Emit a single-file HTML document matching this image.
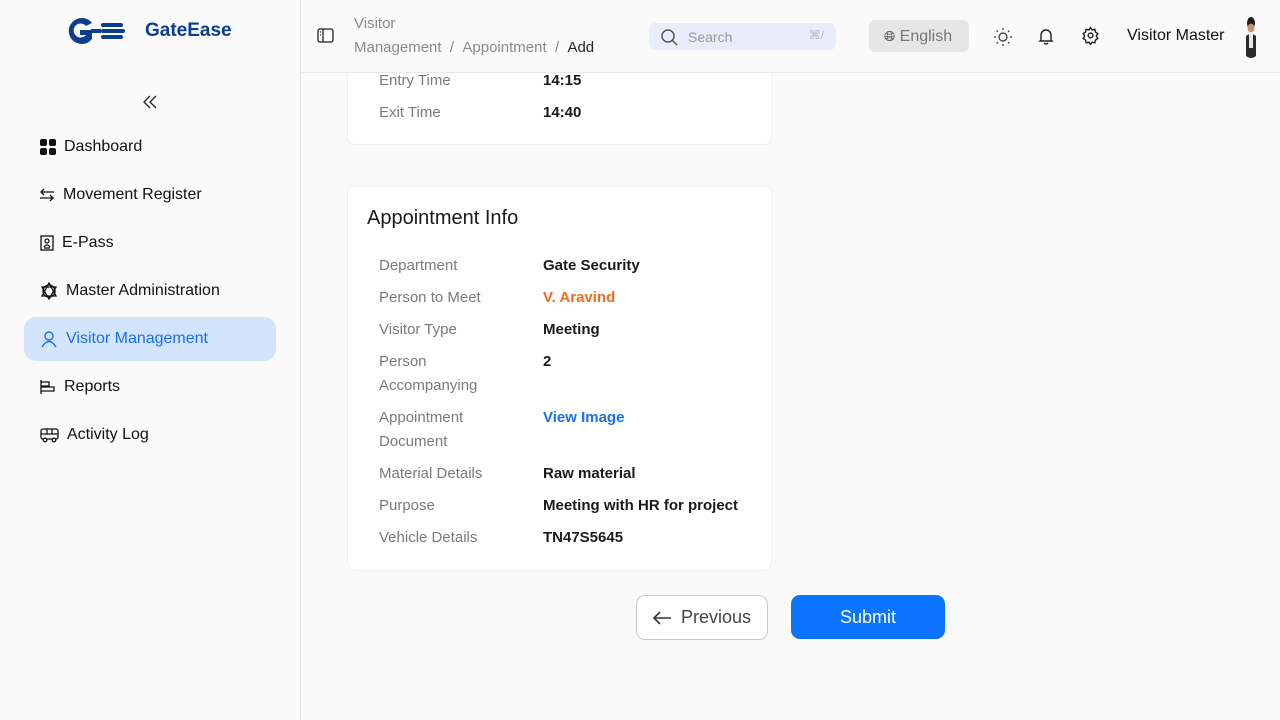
<!DOCTYPE html>
<html><head><style>
*{box-sizing:border-box;margin:0;padding:0}
body{width:1280px;height:720px;overflow:hidden;background:#fafafa;font-family:"Liberation Sans",sans-serif;color:#1a1a1a;position:relative}
.side{position:absolute;left:0;top:0;width:301px;height:720px;border-right:1px solid #e6e6e6;background:#fafafa}
.logo{position:absolute;left:65px;top:16px}
.brand{position:absolute;left:145px;top:20px;font-size:19px;font-weight:bold;color:#0b3d91}
.nav{position:absolute;left:24px;width:252px;height:44px;border-radius:12px;display:flex;align-items:center;padding-left:16px;font-size:16px;color:#111}
.nav svg{margin-right:8px}
.nav.act{background:#d3e5fd;color:#1a6ff0}
.hdr{position:absolute;left:301px;top:0;right:0;height:73px;border-bottom:1px solid #e8e8e8;background:#fafafa;z-index:10}
.card{position:absolute;left:347px;width:425px;background:#fff;border:1px solid #f0f0f0;border-radius:8px}
.row{position:absolute;left:379px;font-size:15px;color:#7a7a7a;line-height:24px}
.val{position:absolute;left:543px;font-size:15px;font-weight:bold;color:#1a1a1a;line-height:24px}
</style></head><body>
<div class="side">
<svg class="logo" width="60" height="30" viewBox="0 0 60 30"><path d="M27 7A13 13 0 1 0 27 23L27 14H15V19H21A7 7 0 1 1 21 10Z" fill="#0b3d91"/><rect x="26" y="13" width="10" height="4" fill="#0b3d91"/><rect x="36" y="7" width="22" height="4" rx="2" fill="#0b3d91"/><rect x="36" y="13" width="24" height="4" rx="2" fill="#0b3d91"/><rect x="36" y="19" width="22" height="4" rx="2" fill="#0b3d91"/></svg>
<div class="brand">GateEase</div>
<svg style="position:absolute;left:142px;top:94px" width="16" height="16" viewBox="0 0 16 16" fill="none" stroke="#222" stroke-width="1.3"><path d="M8 2L2 8L8 14M14 2L8 8L14 14"/></svg>
<div class="nav" style="top:125px"><svg width="16" height="16" viewBox="0 0 16 16" fill="#111"><rect x="0" y="0" width="7" height="7" rx="2"/><rect x="9" y="0" width="7" height="7" rx="2"/><rect x="0" y="9" width="7" height="7" rx="2"/><rect x="9" y="9" width="7" height="7" rx="2"/></svg>Dashboard</div>
<div class="nav" style="top:173px;padding-left:15px"><svg width="16" height="16" viewBox="0 0 16 16" fill="none" stroke="#111" stroke-width="1.3"><path d="M15 5H2M5 2L2 5L5 8M1 11H14M11 8L14 11L11 14"/></svg>Movement Register</div>
<div class="nav" style="top:221px"><svg width="14" height="16" viewBox="0 0 14 16" fill="none" stroke="#111" stroke-width="1.3"><rect x="1" y="1" width="12" height="14"/><circle cx="7" cy="6" r="2"/><path d="M4 12Q7 8 10 12M4 13H10"/></svg>E-Pass</div>
<div class="nav" style="top:269px"><svg width="18" height="18" viewBox="0 0 18 18" fill="none" stroke="#111" stroke-width="1.3"><circle cx="9" cy="9" r="6"/><path d="M9 1L16 14H2Z"/><path d="M2 5H16L9 17Z"/></svg>Master Administration</div>
<div class="nav act" style="top:317px"><svg width="18" height="18" viewBox="0 0 18 18" fill="none" stroke="#1a6ff0" stroke-width="1.4"><circle cx="9" cy="6" r="4"/><path d="M2 17Q9 6 16 17"/></svg>Visitor Management</div>
<div class="nav" style="top:365px"><svg width="16" height="16" viewBox="0 0 16 16" fill="none" stroke="#111" stroke-width="1.3"><path d="M1 1V15M1 3H9V7H1M1 8H14V12H1"/></svg>Reports</div>
<div class="nav" style="top:413px"><svg width="19" height="16" viewBox="0 0 19 16" fill="none" stroke="#111" stroke-width="1.3"><rect x="1" y="2" width="17" height="10" rx="2"/><path d="M1 7H18M7 2V7M12 2V7"/><circle cx="5" cy="13" r="1.8" fill="#fff"/><circle cx="14" cy="13" r="1.8" fill="#fff"/></svg>Activity Log</div>
</div>
<div class="hdr">
<svg style="position:absolute;left:16px;top:28px" width="17" height="15" viewBox="0 0 17 15" fill="none" stroke="#222" stroke-width="1.3"><rect x="1" y="1" width="15" height="13" rx="2"/><path d="M6 1V14M3 4H4M3 7H4"/></svg>
<div style="position:absolute;left:53px;top:12px;font-size:15px;line-height:24px;color:#8a8a8a;white-space:nowrap">Visitor<br>Management&nbsp; / &nbsp;Appointment&nbsp; / &nbsp;<span style="color:#222">Add</span></div>
<div style="position:absolute;left:348px;top:23px;width:187px;height:27px;border-radius:7px;background:#e8ecfb"><svg style="position:absolute;left:11px;top:5px" width="18" height="18" viewBox="0 0 18 18" fill="none" stroke="#555" stroke-width="1.5"><circle cx="8" cy="8" r="6"/><path d="M12.5 12.5L17 17"/></svg><span style="position:absolute;left:39px;top:6px;font-size:14px;color:#999">Search</span><span style="position:absolute;right:12px;top:5px;font-size:12px;color:#bbb">⌘/</span></div>
<div style="position:absolute;left:568px;top:20px;width:100px;height:32px;border-radius:6px;background:#e6e6e6;font-size:16px;color:#777;line-height:32px;padding-left:15px"><span style="font-size:14px;color:#333">🌐︎</span> English</div>
<svg style="position:absolute;left:692px;top:27px" width="20" height="20" viewBox="0 0 20 20" fill="none" stroke="#333" stroke-width="1.2"><circle cx="10" cy="10" r="4"/><path d="M10 1V3M10 17V19M1 10H3M17 10H19M3.6 3.6L5 5M15 15L16.4 16.4M3.6 16.4L5 15M15 5L16.4 3.6"/></svg>
<svg style="position:absolute;left:737px;top:27px" width="16" height="18" viewBox="0 0 16 18" fill="none" stroke="#222" stroke-width="1.4"><path d="M3 13V8A5 5 0 0 1 13 8V13L14 14H2Z"/><path d="M6 16Q8 18 10 16"/></svg>
<svg style="position:absolute;left:780px;top:26px" width="19" height="19" viewBox="0 0 24 24" fill="none" stroke="#222" stroke-width="1.8"><circle cx="12" cy="12" r="3"/><path d="M12 2l2 3 3.5-.8.8 3.5 3 2-2 3 2 3-3 2-.8 3.5-3.5-.8-2 3-2-3-3.5.8-.8-3.5-3-2 2-3-2-3 3-2 .8-3.5 3.5.8z"/></svg>
<div style="position:absolute;left:826px;top:27px;font-size:16px;color:#111">Visitor Master</div>
<svg style="position:absolute;left:943px;top:14px" width="14" height="46" viewBox="0 0 14 46"><ellipse cx="7" cy="9" rx="4" ry="6" fill="#1a1a1a"/><ellipse cx="7" cy="14" rx="3.5" ry="4.5" fill="#c98f6f"/><path d="M2 22Q7 18 12 22L12 42Q7 46 2 42Z" fill="#2a2a2a"/><rect x="5" y="20" width="4" height="14" fill="#e8e8e8"/></svg>
</div>
<div class="card" style="top:40px;height:105px"></div>
<div class="row" style="top:69px">Entry Time</div><div class="val" style="top:69px">14:15</div>
<div class="row" style="top:101px">Exit Time</div><div class="val" style="top:101px">14:40</div>
<div class="card" style="top:185px;height:386px"></div>
<div style="position:absolute;left:367px;top:207px;font-size:20px;color:#1a1a1a">Appointment Info</div>
<div class="row" style="top:254px">Department</div><div class="val" style="top:254px">Gate Security</div>
<div class="row" style="top:286px">Person to Meet</div><div class="val" style="top:286px;color:#f06a21">V. Aravind</div>
<div class="row" style="top:318px">Visitor Type</div><div class="val" style="top:318px">Meeting</div>
<div class="row" style="top:350px">Person<br>Accompanying</div><div class="val" style="top:350px">2</div>
<div class="row" style="top:406px">Appointment<br>Document</div><div class="val" style="top:406px;color:#1a6ff0">View Image</div>
<div class="row" style="top:462px">Material Details</div><div class="val" style="top:462px">Raw material</div>
<div class="row" style="top:494px">Purpose</div><div class="val" style="top:494px">Meeting with HR for project</div>
<div class="row" style="top:526px">Vehicle Details</div><div class="val" style="top:526px">TN47S5645</div>
<div style="position:absolute;left:636px;top:595px;width:132px;height:45px;border:1px solid #c8c8c8;border-radius:9px;background:#fff;font-size:18px;color:#444;line-height:43px;padding-left:44px">Previous<svg style="position:absolute;left:15px;top:14px" width="20" height="16" viewBox="0 0 20 16" fill="none" stroke="#333" stroke-width="1.6"><path d="M19 8H2M8 2L2 8L8 14"/></svg></div>
<div style="position:absolute;left:791px;top:595px;width:154px;height:44px;border-radius:9px;background:#0a74ff;color:#fff;font-size:18px;line-height:44px;text-align:center">Submit</div>
</body></html>
